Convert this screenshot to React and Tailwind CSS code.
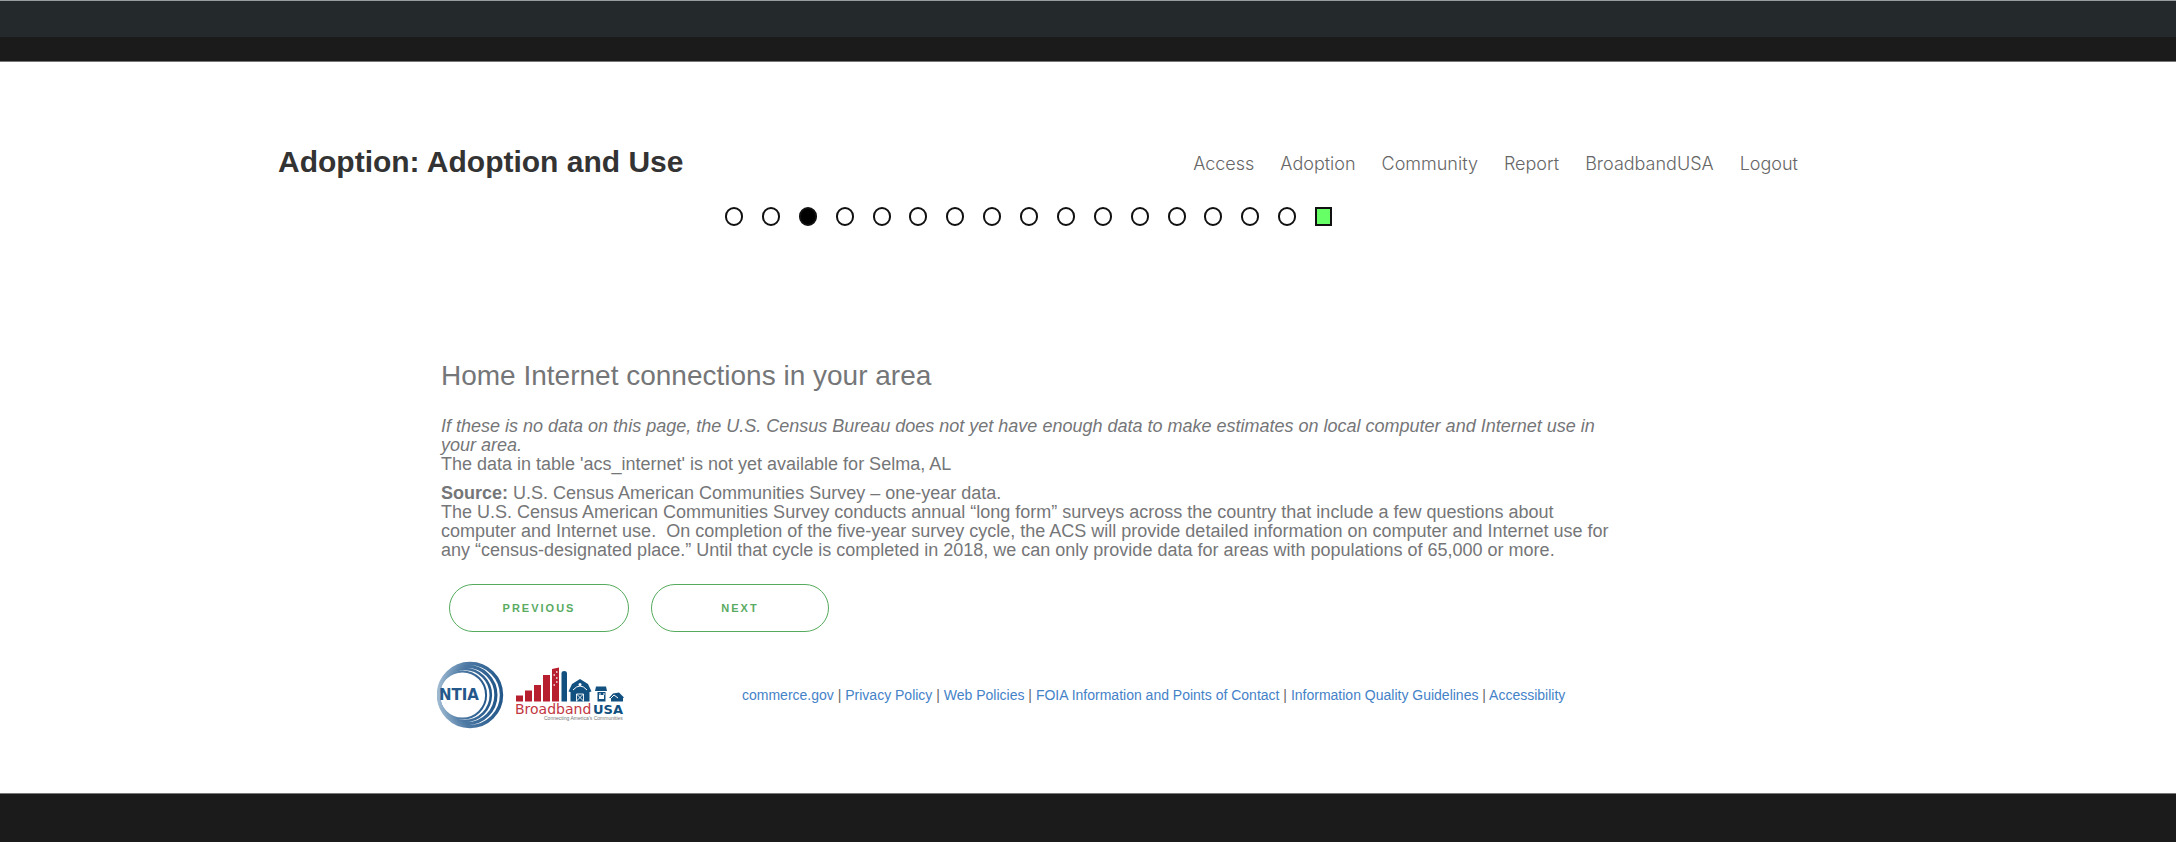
const NAV = ['Access', 'Adoption', 'Community', 'Report', 'BroadbandUSA', 'Logout'];
const LINKS = [
  'commerce.gov',
  'Privacy Policy',
  'Web Policies',
  'FOIA Information and Points of Contact',
  'Information Quality Guidelines',
  'Accessibility',
];
const STEPS = Array.from({ length: 16 }, (_, i) => i);

function NtiaLogo() {
  return (
    <svg viewBox="0 0 68 68" className="h-[68px] w-[68px]" role="img" aria-label="NTIA">
      <defs>
        <linearGradient id="ring" x1="0" y1="0" x2="1" y2="0">
          <stop offset="0" stopColor="#9db9d1" />
          <stop offset="0.45" stopColor="#4f7ba5" />
          <stop offset="1" stopColor="#24588b" />
        </linearGradient>
      </defs>
      <g fill="none" stroke="url(#ring)">
        <circle cx="33" cy="34" r="31.5" strokeWidth="3.4" />
        <circle cx="30.3" cy="34" r="28.6" strokeWidth="3.2" />
        <circle cx="27.8" cy="34" r="26" strokeWidth="2.6" />
        <circle cx="25.5" cy="34" r="23.6" strokeWidth="2" />
      </g>
      <text x="2" y="39" fontFamily="DejaVu Sans" fontWeight="bold" fontSize="15" fill="#24588b">NTIA</text>
    </svg>
  );
}

function BroadbandLogo() {
  return (
    <svg viewBox="0 0 110 56" className="h-[56px] w-[110px]" role="img" aria-label="BroadbandUSA">
      <g fill="#b71f2e">
        <rect x="1" y="28.5" width="7" height="6" />
        <rect x="10" y="23.5" width="7" height="11" />
        <rect x="19" y="18" width="7" height="16.5" />
        <rect x="28" y="8" width="7" height="26.5" />
        <path d="M37 2l7-1.5v34h-7z" />
      </g>
      <g fill="#e6b3b8">
        <rect x="41" y="4" width="1.5" height="2" />
        <rect x="38.5" y="7" width="1.5" height="2" />
        <rect x="41" y="10" width="1.5" height="2" />
        <rect x="41" y="14" width="1.5" height="2" />
        <rect x="38.5" y="17" width="1.5" height="2" />
      </g>
      <g fill="#11507f">
        <path d="M46.5 34.5V6q0-2 2.7-2T52 6v28.500z" />
        <path d="M55.500 34.500V25l-2-.5 3.500-7.500 8-5 8 5 3.500 7.500-2 .5v9.500z" />
        <path d="M81 19.500h10l1 4.500h-1.500v10.500h-8V24H80z" />
        <path d="M94 31l4-4.500 6-1 5 5-1 .5v3.500H96V31z" />
      </g>
      <g fill="none" stroke="#fff">
        <path d="M58 23q7-8 14 0" strokeWidth="1" />
        <path d="M61.500 34.500V27h7v7.500M61.500 27l7 7M68.500 27l-7 7" strokeWidth="0.9" />
        <path d="M80 24.500h12M84 27h2M88 27h2M96 31l3-3 4 3" strokeWidth="1" />
      </g>
      <circle cx="65" cy="17.500" r="1.500" fill="#fff" />
      <rect x="84" y="28" width="5" height="4" fill="#fff" />
      <text x="0" y="47" fontFamily="DejaVu Sans" fontSize="14" fill="#c23642">Broadband</text>
      <text x="78" y="47" fontFamily="DejaVu Sans" fontWeight="bold" fontSize="13" fill="#11507f">USA</text>
      <text x="29" y="53" fontFamily="Liberation Sans" fontSize="5" fill="#777">Connecting America’s Communities</text>
    </svg>
  );
}

export default function App() {
  return (
    <div className="bg-[#1b1b1b] pb-12 font-['Liberation_Sans',sans-serif]">
      <div className="h-[37px] border-t border-[#999c9e] bg-[#24292c]" />
      <div className="h-6" />
      <div className="border-y border-[#777] bg-white pb-16 text-[#757678]">
        <header className="mr-[378px] ml-[278px] flex items-center justify-between pt-[82px]">
          <h1 className="text-[30px] leading-9 font-bold text-[#333]">Adoption: Adoption and Use</h1>
          <nav className="flex gap-[26px] pt-1 font-['Inter',sans-serif] text-[18px] leading-6 font-light text-[#666]">
            {NAV.map((item) => (
              <a key={item} href="#">{item}</a>
            ))}
          </nav>
        </header>
        <ol className="mt-[27px] ml-[725px] flex w-[607px] justify-between">
          {STEPS.map((i) => (
            <li key={i} className={`h-[19px] w-[18px] rounded-full border-2 border-[#111] ${i === 2 ? 'bg-black' : 'bg-white'}`} />
          ))}
          <li className="h-[19px] w-[17px] border-2 border-[#111] bg-[#66ff66]" />
        </ol>
        <main className="ml-[441px] max-w-[1185px]">
          <h2 className="pt-[134px] text-[28px] leading-8">Home Internet connections in your area</h2>
          <div className="mt-[25px] text-[18px] leading-[19px]">
            <p className="italic">
              If these is no data on this page, the U.S. Census Bureau does not yet have enough data to make estimates on local computer and Internet use in your area.
            </p>
            <p>The data in table 'acs_internet' is not yet available for Selma, AL</p>
            <p className="mt-[10px]"><strong>Source:</strong> U.S. Census American Communities Survey – one-year data.</p>
            <p>
              The U.S. Census American Communities Survey conducts annual “long form” surveys across the country that include a few questions about computer and Internet use.&nbsp; On completion of the five-year survey cycle, the ACS will provide detailed information on computer and Internet use for any “census-designated place.” Until that cycle is completed in 2018, we can only provide data for areas with populations of 65,000 or more.
            </p>
          </div>
          <div className="mt-6 ml-2 flex gap-[22px] text-[11px] font-bold text-[#5aab62]">
            <button type="button" className="h-12 w-[180px] rounded-full border border-[#55ab5d] tracking-[2px]">PREVIOUS</button>
            <button type="button" className="h-12 w-[178px] rounded-full border border-[#55ab5d] tracking-[2px]">NEXT</button>
          </div>
        </main>
        <footer className="mt-[29px] ml-[437px] flex items-center">
          <NtiaLogo />
          <div className="ml-[10px]"><BroadbandLogo /></div>
          <p className="ml-[117px] text-[14px] leading-5 text-[#666]">
            {LINKS.map((l, i) => (
              <span key={l}>
                {i > 0 && ' | '}
                <a href="#" className="text-[#4482c8]">{l}</a>
              </span>
            ))}
          </p>
        </footer>
      </div>
    </div>
  );
}
